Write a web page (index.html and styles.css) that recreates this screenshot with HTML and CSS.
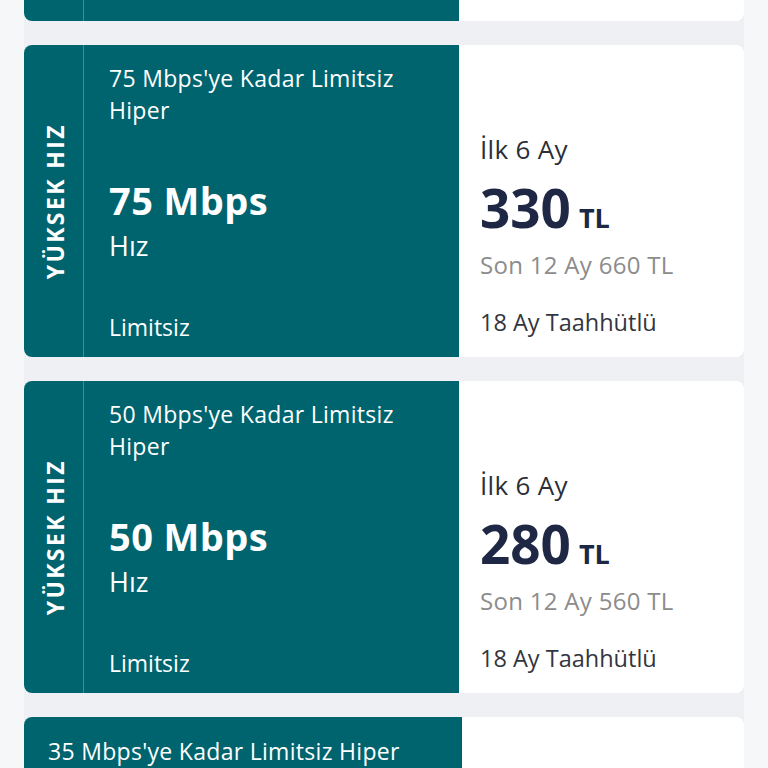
FILE: index.html
```html
<!DOCTYPE html>
<html lang="tr">
<head>
<meta charset="utf-8">
<link rel="stylesheet" href="styles.css">
</head>
<body>
<div class="list">
  <div class="card">
    <div class="teal">
      <div class="side"></div>
      <div class="main"></div>
    </div>
    <div class="price"></div>
  </div>
  <div class="card">
    <div class="teal">
      <div class="side"><span class="side-label">YÜKSEK HIZ</span></div>
      <div class="main">
        <div class="title">75 Mbps'ye Kadar Limitsiz<br>Hiper</div>
        <div class="speed-val">75 Mbps</div>
        <div class="speed-unit">Hız</div>
        <div class="quota">Limitsiz</div>
      </div>
    </div>
    <div class="price">
      <div class="p-first">İlk 6 Ay</div>
      <div class="p-amount">330<span class="p-cur">TL</span></div>
      <div class="p-later">Son 12 Ay 660 TL</div>
      <div class="p-term">18 Ay Taahhütlü</div>
    </div>
  </div>
  <div class="card">
    <div class="teal">
      <div class="side"><span class="side-label">YÜKSEK HIZ</span></div>
      <div class="main">
        <div class="title">50 Mbps'ye Kadar Limitsiz<br>Hiper</div>
        <div class="speed-val">50 Mbps</div>
        <div class="speed-unit">Hız</div>
        <div class="quota">Limitsiz</div>
      </div>
    </div>
    <div class="price">
      <div class="p-first">İlk 6 Ay</div>
      <div class="p-amount">280<span class="p-cur">TL</span></div>
      <div class="p-later">Son 12 Ay 560 TL</div>
      <div class="p-term">18 Ay Taahhütlü</div>
    </div>
  </div>
  <div class="card card-last">
    <div class="teal teal-wide">
      <div class="main main-plain">
        <div class="title">35 Mbps'ye Kadar Limitsiz Hiper</div>
      </div>
    </div>
    <div class="price"></div>
  </div>
</div>
</body>
</html>
```
FILE: styles.css
```css
html, body {
  margin: 0;
  padding: 0;
  background: #f6f7f9;
  font-family: "Open Sans", "Noto Sans", sans-serif;
  overflow: hidden;
  height: 768px;
}
.list {
  display: flex;
  flex-direction: column;
  gap: 24px;
  margin: -291px 24px 0;
  background: #eff0f3;
}
.card {
  display: flex;
  height: 312px;
  border-radius: 8px;
  overflow: hidden;
  background: #fff;
}
.card-last { height: 51px; border-radius: 8px 8px 0 0; }
.teal {
  width: 435px;
  flex: none;
  display: flex;
  background: #00646f;
  color: #fff;
}
.teal-wide { width: 438px; }
.side {
  width: 59px;
  flex: none;
  border-right: 1px solid #3d8e97;
  display: flex;
  align-items: center;
  justify-content: center;
}
.side-label {
  writing-mode: vertical-rl;
  transform: rotate(180deg);
  font-weight: 700;
  font-size: 23px;
  letter-spacing: 2.4px;
  white-space: nowrap;
  margin-left: 2px;
}
.main {
  flex: 1;
  display: flex;
  flex-direction: column;
  padding: 17px 20px 14px 25px;
}
.main-plain { padding: 18px 24px 0; }
.title {
  font-size: 23px;
  line-height: 32px;
  letter-spacing: 0.3px;
}
.speed-val {
  margin-top: 50px;
  font-size: 38px;
  font-weight: 700;
  line-height: 48px;
  letter-spacing: 0.4px;
}
.speed-unit {
  margin-top: 5px;
  font-size: 27px;
  line-height: 34px;
}
.quota {
  margin-top: auto;
  font-size: 23px;
  line-height: 32px;
}
.price {
  flex: 1;
  display: flex;
  flex-direction: column;
  justify-content: flex-end;
  padding: 0 20px 20px 21px;
  color: #2b2f3a;
}
.p-first {
  font-size: 26px;
  line-height: 34px;
  letter-spacing: 0.3px;
}
.p-amount {
  margin-top: 12px;
  font-size: 53px;
  font-weight: 700;
  line-height: 60px;
  color: #1e2743;
}
.p-cur {
  font-size: 27px;
  line-height: 1;
  margin-left: 8px;
  color: #1e2743;
}
.p-later {
  margin-top: 12px;
  font-size: 24px;
  line-height: 30px;
  letter-spacing: 0.3px;
  color: #8c8c8c;
}
.p-term {
  margin-top: 27px;
  font-size: 23.5px;
  line-height: 30px;
  color: #333640;
}
```
